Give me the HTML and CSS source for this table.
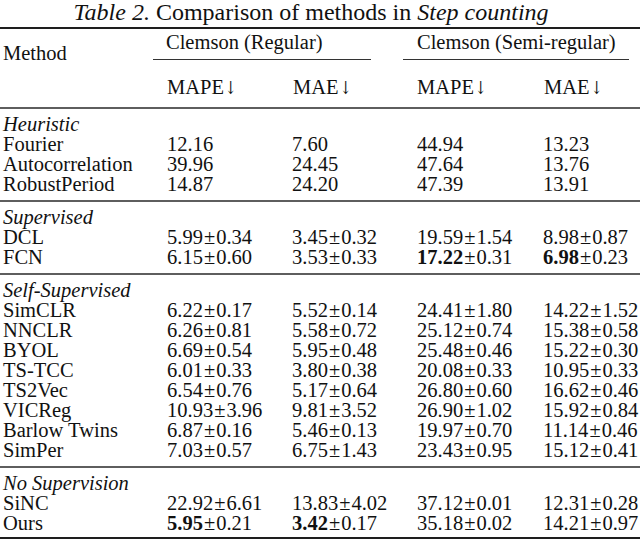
FILE: index.html
```html
<!DOCTYPE html>
<html>
<head>
<meta charset="utf-8">
<link rel="stylesheet" href="styles.css">
</head>
<body>
<div class="page">
  <p class="caption"><em>Table 2.</em> Comparison of methods in <em>Step counting</em></p>
  <div class="rule rule-top"></div>
  <div class="head">
    <div class="method">Method</div>
    <div class="dataset ds1">Clemson (Regular)</div>
    <div class="dataset ds2">Clemson (Semi-regular)</div>
    <div class="metric m1">MAPE<span class="arrow">↓</span></div>
    <div class="metric m2">MAE<span class="arrow">↓</span></div>
    <div class="metric m3">MAPE<span class="arrow">↓</span></div>
    <div class="metric m4">MAE<span class="arrow">↓</span></div>
  </div>
  <div class="rule rule-mid"></div>

  <div class="group">
    <div class="label">Heuristic</div>
    <div class="row"><span>Fourier</span><span>12.16</span><span>7.60</span><span>44.94</span><span>13.23</span></div>
    <div class="row"><span>Autocorrelation</span><span>39.96</span><span>24.45</span><span>47.64</span><span>13.76</span></div>
    <div class="row"><span>RobustPeriod</span><span>14.87</span><span>24.20</span><span>47.39</span><span>13.91</span></div>
  </div>
  <div class="rule rule-mid"></div>

  <div class="group">
    <div class="label">Supervised</div>
    <div class="row"><span>DCL</span><span>5.99<i class="pm">±</i>0.34</span><span>3.45<i class="pm">±</i>0.32</span><span>19.59<i class="pm">±</i>1.54</span><span>8.98<i class="pm">±</i>0.87</span></div>
    <div class="row"><span>FCN</span><span>6.15<i class="pm">±</i>0.60</span><span>3.53<i class="pm">±</i>0.33</span><span><b>17.22</b><i class="pm">±</i>0.31</span><span><b>6.98</b><i class="pm">±</i>0.23</span></div>
  </div>
  <div class="rule rule-mid"></div>

  <div class="group">
    <div class="label">Self-Supervised</div>
    <div class="row"><span>SimCLR</span><span>6.22<i class="pm">±</i>0.17</span><span>5.52<i class="pm">±</i>0.14</span><span>24.41<i class="pm">±</i>1.80</span><span>14.22<i class="pm">±</i>1.52</span></div>
    <div class="row"><span>NNCLR</span><span>6.26<i class="pm">±</i>0.81</span><span>5.58<i class="pm">±</i>0.72</span><span>25.12<i class="pm">±</i>0.74</span><span>15.38<i class="pm">±</i>0.58</span></div>
    <div class="row"><span>BYOL</span><span>6.69<i class="pm">±</i>0.54</span><span>5.95<i class="pm">±</i>0.48</span><span>25.48<i class="pm">±</i>0.46</span><span>15.22<i class="pm">±</i>0.30</span></div>
    <div class="row"><span>TS-TCC</span><span>6.01<i class="pm">±</i>0.33</span><span>3.80<i class="pm">±</i>0.38</span><span>20.08<i class="pm">±</i>0.33</span><span>10.95<i class="pm">±</i>0.33</span></div>
    <div class="row"><span>TS2Vec</span><span>6.54<i class="pm">±</i>0.76</span><span>5.17<i class="pm">±</i>0.64</span><span>26.80<i class="pm">±</i>0.60</span><span>16.62<i class="pm">±</i>0.46</span></div>
    <div class="row"><span>VICReg</span><span>10.93<i class="pm">±</i>3.96</span><span>9.81<i class="pm">±</i>3.52</span><span>26.90<i class="pm">±</i>1.02</span><span>15.92<i class="pm">±</i>0.84</span></div>
    <div class="row"><span>Barlow Twins</span><span>6.87<i class="pm">±</i>0.16</span><span>5.46<i class="pm">±</i>0.13</span><span>19.97<i class="pm">±</i>0.70</span><span>11.14<i class="pm">±</i>0.46</span></div>
    <div class="row"><span>SimPer</span><span>7.03<i class="pm">±</i>0.57</span><span>6.75<i class="pm">±</i>1.43</span><span>23.43<i class="pm">±</i>0.95</span><span>15.12<i class="pm">±</i>0.41</span></div>
  </div>
  <div class="rule rule-mid"></div>

  <div class="group group-last">
    <div class="label">No Supervision</div>
    <div class="row"><span>SiNC</span><span>22.92<i class="pm">±</i>6.61</span><span>13.83<i class="pm">±</i>4.02</span><span>37.12<i class="pm">±</i>0.01</span><span>12.31<i class="pm">±</i>0.28</span></div>
    <div class="row"><span>Ours</span><span><b>5.95</b><i class="pm">±</i>0.21</span><span><b>3.42</b><i class="pm">±</i>0.17</span><span>35.18<i class="pm">±</i>0.02</span><span>14.21<i class="pm">±</i>0.97</span></div>
  </div>
  <div class="rule rule-bottom"></div>
</div>
</body>
</html>
```

FILE: styles.css
```css
html, body {
  margin: 0;
  padding: 0;
  background: #ffffff;
}

.page {
  width: 640px;
  height: 540px;
  overflow: hidden;
  font-family: "Liberation Serif", "Times New Roman", serif;
  font-size: 20.5px;
  line-height: 20px;
  color: #111111;
}

.caption {
  margin: 0 0 3px 0;
  height: 24px;
  font-size: 24px;
  line-height: 24px;
  text-align: center;
  padding-right: 18px;
  white-space: nowrap;
}

.caption em {
  font-style: italic;
}

.rule {
  width: 640px;
}

.rule-top {
  height: 2px;
  background: #1e1e1e;
}

.rule-mid {
  height: 2px;
  background: #5e5e5e;
}

.rule-bottom {
  height: 2px;
  background: #1e1e1e;
}

.head {
  display: grid;
  grid-template-columns: 167px 125px 125px 126px 97px;
  grid-template-rows: 31px 38px;
  padding-bottom: 9px;
}

.method {
  grid-column: 1;
  grid-row: 1 / 3;
  padding: 14px 0 0 3px;
}

.dataset {
  grid-row: 1;
  align-self: start;
  margin-top: 3px;
  height: 20px;
  padding-bottom: 7px;
  border-bottom: 1px solid #333333;
  white-space: nowrap;
}

.ds1 {
  grid-column: 2 / 4;
  margin-left: -14px;
  margin-right: 46px;
  padding-left: 13px;
}

.ds2 {
  grid-column: 4 / 6;
  margin-left: -14px;
  margin-right: 11px;
  padding-left: 14px;
}

.metric {
  grid-row: 2;
  align-self: end;
  white-space: nowrap;
}

.m2, .m4 {
  padding-left: 1px;
}

.arrow {
  font-family: "DejaVu Serif", serif;
  font-weight: 200;
  font-size: 18px;
  display: inline-block;
  transform: scaleX(0.75);
  margin-left: -1px;
}

.group {
  padding: 5px 0 6px 0;
}

.group-last {
  padding-bottom: 4px;
}

.label {
  font-style: italic;
  padding-left: 3px;
  height: 20px;
}

.row {
  display: grid;
  grid-template-columns: 167px 125px 125px 126px 97px;
  height: 20px;
  white-space: nowrap;
}

.row span:first-child {
  padding-left: 3px;
}

.row b {
  font-weight: bold;
}

.pm {
  font-style: normal;
  margin: 0 1px;
}
```
